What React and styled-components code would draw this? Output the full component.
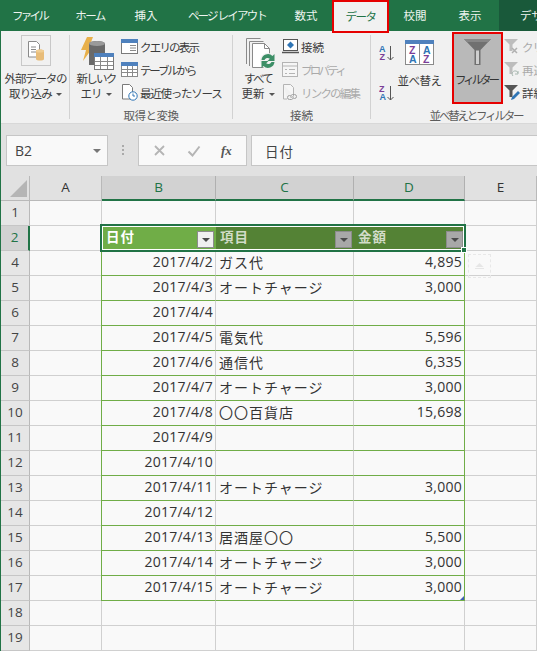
import React from 'react';
import styled, { createGlobalStyle } from 'styled-components';

const Global = createGlobalStyle`
  html, body { margin: 0; padding: 0; background: #f9f9f9; }
  body { font-family: "Noto Sans CJK JP", "Noto Sans", sans-serif; overflow: hidden; }
  #root { width: 537px; height: 651px; overflow: hidden; }
`;
const Page = styled.div`width: 537px; height: 651px; overflow: hidden; display: flex; flex-direction: column; border-left: 1px solid #217346; box-sizing: border-box;`;
const Tabs = styled.div`height: 31px; margin-left: -1px; background: #217346; display: flex; flex: none; position: relative;`;
const Tab = styled.div`
  width: ${p => p.$w}px; flex: none; box-sizing: border-box; text-align: center; font-size: 11.5px; line-height: 31px; white-space: nowrap;
  color: #eef5f0; letter-spacing: ${p => p.$ls || 0}px; margin-left: ${p => p.$ml || 0}px;
  ${p => p.$active && 'background:#f1f1f1;color:#217346;border:2px solid #e60000;height:33px;line-height:29px;position:relative;z-index:2;'}
  ${p => p.$dark && 'background:#19593a;text-align:left;padding-left:21px;flex:1;'}
`;
const Ribbon = styled.div`height: 92px; background: #f1f1f1; display: flex; flex: none; border-bottom: 1px solid #d8d8d8; box-sizing: content-box; overflow: hidden;`;
const Group = styled.div`
  width: ${p => p.$w}px; flex: none; box-sizing: border-box; display: flex; flex-direction: column; position: relative; margin-top: 4px;
  ${p => p.$last ? '' : 'border-right: 1px solid #d2d2d2; height: 84px;'}
`;
const GroupBody = styled.div`height: 71px; display: flex; flex: none; padding-left: ${p => p.$pl || 0}px;`;
const GroupLabel = styled.div`font-size: 11.5px; line-height: 14px; color: #5c5c5c; text-align: center; margin-top: 2px; width: ${p => p.$w || '100%'}; white-space: nowrap; letter-spacing: ${p => p.$ls || 0}px; margin-left: ${p => p.$ml || 0}px;`;
const BigButton = styled.div`width: ${p => p.$w}px; flex: none; display: flex; flex-direction: column; align-items: center; font-size: 11.5px; line-height: 15px; color: #3c3c3c; white-space: nowrap; text-align: center;`;
const IconBox = styled.div`width: 30px; height: 31px; box-sizing: border-box; border: 1px solid #c8c8c8; display: flex; align-items: center; justify-content: center; margin-bottom: 5px;`;
const BigIcon = styled.div`height: ${p => p.$h}px; box-sizing: border-box; padding-top: ${p => p.$pt || 0}px; padding-left: ${p => p.$pl || 0}px; display: flex; align-items: flex-start; justify-content: center;`;
const Txt = styled.span`letter-spacing: ${p => p.$ls || 0}px;`;
const Caret = styled.span`display: inline-block; width: 0; height: 0; border-left: 3px solid transparent; border-right: 3px solid transparent; border-top: 3px solid #555; vertical-align: 2px; margin-left: 4px;`;
const List = styled.div`display: flex; flex-direction: column; margin-left: ${p => p.$ml || 0}px; flex: none;`;
const Item = styled.div`height: 23px; display: flex; align-items: center; gap: 2px; font-size: 11.5px; white-space: nowrap; color: ${p => p.$off ? '#aaaaaa' : '#3c3c3c'};`;
const SortStack = styled.div`width: 18px; flex: none; display: flex; flex-direction: column; gap: 24px; margin: 10px 0 0 8px;`;
const FilterBtn = styled.div`width: 51px; height: 72px; margin: -3px 0 0 10px; flex: none; box-sizing: border-box; background: #b9b9b9; border: 2px solid #e60000; display: flex; flex-direction: column; align-items: center; font-size: 11.5px; line-height: 15px; color: #333; padding-top: 5px; white-space: nowrap;`;
const FilterLabel = styled.div`margin-top: 7px; letter-spacing: -3.1px; padding-right: 3px;`;
const FormulaBand = styled.div`height: 52px; flex: none; background: #e1e1e1; display: flex; align-items: flex-start; padding: 11px 0 0 5px; box-sizing: border-box;`;
const Field = styled.div`height: 31px; box-sizing: border-box; background: #f9f9f9; border: 1px solid #c6c6c6; flex: none; width: ${p => p.$w}px; display: flex; align-items: center;`;
const NameBox = styled(Field)`justify-content: space-between; padding: 0 6px 0 8px; font-size: 14px; color: #444; font-family: "Open Sans", sans-serif;`;
const NameCaret = styled.span`width: 0; height: 0; border-left: 4px solid transparent; border-right: 4px solid transparent; border-top: 4px solid #777;`;
const Dots = styled.div`width: 30px; flex: none; display: flex; flex-direction: column; align-items: center; gap: 2px; margin-top: 10px;`;
const Dot = styled.span`width: 2px; height: 2px; background: #aaa;`;
const FormulaIcons = styled(Field)`justify-content: space-around; padding: 0 4px; margin-right: 4px;`;
const Fx = styled.span`font-family: "Liberation Serif", serif; font-style: italic; font-weight: bold; font-size: 13px; color: #555;`;
const FormulaInput = styled(Field)`padding-left: 13px; font-size: 13.5px; color: #444; border-right: none; letter-spacing: 1px;`;

const Sheet = styled.div`display: grid; grid-template-columns: 29px 72px 114px 138px 111px 72px; grid-template-rows: 25px repeat(18, 25px); background: #f9f9f9; flex: none;`;
const Corner = styled.div`background: #e1e1e1; border-right: 1px solid #b9b9b9; border-bottom: 1px solid #b9b9b9; box-sizing: border-box; position: relative; overflow: hidden; &::after { content: ''; position: absolute; right: 2px; bottom: 3px; border-style: solid; border-width: 0 0 17px 17px; border-color: transparent transparent #b5b5b5 transparent; }`;
const ColHead = styled.div`
  box-sizing: border-box; text-align: center; font-size: 13.5px; line-height: 22px; font-family: "Open Sans", sans-serif;
  border-right: 1px solid ${p => p.$on ? '#b0b0b0' : '#b9b9b9'};
  background: ${p => p.$on ? '#d2d2d2' : '#e1e1e1'}; color: ${p => p.$on ? '#217346' : '#333'};
  border-bottom: ${p => p.$on ? '2px solid #217346' : '1px solid #b9b9b9'};
`;
const RowHead = styled.div`
  box-sizing: border-box; text-align: center; font-size: 13.5px; line-height: 22px; font-family: "Open Sans", sans-serif;
  background: ${p => p.$on ? '#d2d2d2' : '#e6e6e6'}; color: ${p => p.$on ? '#217346' : '#444'};
  border-bottom: 1px solid #c6c6c6;
  border-right: ${p => p.$on ? '2px solid #217346' : '1px solid #b9b9b9'};
`;
const Cell = styled.div`
  box-sizing: border-box; border-right: 1px solid ${p => p.$gr ? '#70ad47' : '#d0d0d0'}; border-bottom: 1px solid ${p => p.$gb ? '#70ad47' : '#d0d0d0'};
  ${p => p.$gl && 'box-shadow: -1px 0 0 #70ad47;'}
  font-size: 14px; line-height: 22px; color: #333; white-space: nowrap; padding: 0 2px 0 3px; letter-spacing: ${p => p.$jp ? '1px' : '0.25px'};
  text-align: ${p => p.$right ? 'right' : 'left'};
  font-family: ${p => p.$jp ? '"Noto Sans CJK JP"' : '"Open Sans"'}, sans-serif;
`;
const HeadCell = styled.div`
  box-sizing: border-box; background: ${p => p.$first ? '#70ad47' : '#548235'}; color: ${p => p.$first ? '#fff' : '#d2dcc8'};
  display: flex; justify-content: space-between; padding: 0 2px 0 4px; font-size: 13.5px; font-weight: bold; line-height: 21px; letter-spacing: 1px;
`;
const Drop = styled.span`width: 17px; height: 17px; margin-top: 5px; flex: none; box-sizing: border-box; border: 1px solid #8c8c8c; background: ${p => p.$first ? '#f0f0f0' : '#a8a8a8'}; display: flex; align-items: center; justify-content: center; &::after { content: ''; border-left: 4px solid transparent; border-right: 4px solid transparent; border-top: 4px solid #4a4a4a; }`;
const Selection = styled.div`grid-column: 3 / 6; grid-row: 3; margin: -2px -1px -1px -2px; border: 2px solid #217346; position: relative; pointer-events: none; box-shadow: inset 0 0 0 1px #fff; z-index: 2; &::after { content: ''; position: absolute; right: -3px; bottom: -3px; width: 6px; height: 6px; box-sizing: border-box; background: #217346; border: 1px solid #fff; }`;
const HeadRow = styled.div`grid-column: 3 / 6; grid-row: 3; display: grid; grid-template-columns: 114px 138px 111px; `;
const Corner2 = styled.div`position: absolute; right: 0; bottom: 0; width: 4px; height: 4px; background: #3f5fb5; clip-path: polygon(100% 0, 100% 100%, 0 100%);`;
const SmartTag = styled.div`position: absolute; left: 3px; top: 3px; width: 23px; height: 24px; border: 1px dashed #e8e8e8; box-sizing: border-box; display: flex; align-items: center; justify-content: center;`;
const EdgeCell = styled(Cell)`position: relative; overflow: visible;`;

const TableIcon = () => (
  <svg width="17" height="15" viewBox="0 0 17 15"><rect x="0.5" y="0.5" width="16" height="14" fill="#fff" stroke="#8a8a8a"/><rect x="0" y="0" width="17" height="4" fill="#4f81bd"/><path d="M1 7.5h15M1 10.5h15M6.5 4v10M11.5 4v10" stroke="#8a8a8a"/></svg>
);
const QueryIcon = () => (
  <svg width="17" height="15" viewBox="0 0 17 15"><rect x="0.5" y="0.5" width="16" height="14" fill="#fff" stroke="#7a7a7a"/><rect x="0" y="0" width="17" height="4" fill="#4f81bd"/><path d="M9 6.5h6M9 9h6M9 11.5h6" stroke="#8a8a8a"/></svg>
);
const RecentIcon = () => (
  <svg width="17" height="17" viewBox="0 0 17 17"><path d="M1.5.5h7l3 3V15h-10z" fill="#fff" stroke="#7a7a7a"/><circle cx="12" cy="12" r="4.2" fill="#fff" stroke="#2f75b5"/><path d="M12 9.5V12h2" stroke="#2f75b5" fill="none"/></svg>
);
const Lightning = () => (
  <svg width="33" height="33" viewBox="0 0 33 33">
    <path d="M6 0h6L8.5 9H13L2 24l3-11H0z" fill="#e8b04a"/>
    <path d="M8 7c0-4 16-4 16 0v21H8z" fill="#6a6a6a"/>
    <ellipse cx="16" cy="6.5" rx="8" ry="2.6" fill="#9a9a9a"/>
    <rect x="13.5" y="16.5" width="19" height="16" fill="#fff" stroke="#7a7a7a"/>
    <rect x="13" y="16" width="20" height="4" fill="#4f81bd"/>
    <path d="M14 24.5h18M14 28.5h18M19.5 20v12M26.5 20v12" stroke="#8a8a8a"/>
  </svg>
);
const ExternalIcon = () => (
  <svg width="18" height="20" viewBox="0 0 18 20"><path d="M1.5.5h8l3 3V16h-11z" fill="#fff" stroke="#8a8a8a"/><path d="M4 6h5M4 8.5h5M4 11h5" stroke="#8a8a8a"/><path d="M9 10c0-2 8-2 8 0v8c0 2-8 2-8 0z" fill="#e8bc78"/><ellipse cx="13" cy="10" rx="4" ry="1.5" fill="#f0cd92"/></svg>
);
const Refresh = () => (
  <svg width="30" height="32" viewBox="0 0 30 32">
    <path d="M.5 26V.5h14" fill="none" stroke="#8a8a8a"/>
    <path d="M3.5 28V3.5h14" fill="none" stroke="#8a8a8a"/>
    <path d="M6.5 5.5h12l5 5v19h-17z" fill="#fff" stroke="#8a8a8a"/>
    <path d="M18.5 5.5v5h5" fill="none" stroke="#8a8a8a"/>
    <circle cx="22" cy="23" r="8" fill="#f1f1f1"/>
    <path d="M15.5 22a6.5 6.5 0 0 1 11-4l2-2v7h-7l2.300-2.300a3.500 3.500 0 0 0-5.300 1.300z" fill="#3d8f67"/>
    <path d="M28.500 24a6.500 6.500 0 0 1-11 4l-2 2v-7h7l-2.300 2.300a3.500 3.500 0 0 0 5.300-1.300z" fill="#3d8f67"/>
  </svg>
);
const ConnIcon = () => (
  <svg width="17" height="15" viewBox="0 0 17 15"><rect x="1.500" y="0.500" width="14" height="11" fill="#fff" stroke="#555"/><path d="M0 13.500h17" stroke="#555" strokeWidth="1.500"/><path d="M8.500 2.500l3.500 3.500-3.500 3.500L5 6z" fill="#2f75b5"/></svg>
);
const PropIcon = () => (
  <svg width="17" height="16" viewBox="0 0 17 16"><rect x="0.500" y="0.500" width="15" height="14" fill="#f6f6f6" stroke="#b4b4b4"/><path d="M0 4h16" stroke="#b4b4b4"/><path d="M3 7.500h2M3 11.500h2M7 7.500h6M7 11.500h6" stroke="#b4b4b4"/></svg>
);
const LinkIcon = () => (
  <svg width="17" height="17" viewBox="0 0 17 17"><path d="M1.500.500h7l3 3V12M5 15H1.500V.500" fill="#f6f6f6" stroke="#b4b4b4"/><path d="M8.500 11.500h-1a2 2 0 0 0 0 4h2a2 2 0 0 0 1-3.500M11.500 14.500h1a2 2 0 0 0 0-4h-2a2 2 0 0 0-1 3.500" fill="none" stroke="#a0a0a0"/></svg>
);
const SortSmall = ({ up }) => (
  <svg width="16" height="16" viewBox="0 0 16 16" fontFamily="Liberation Sans" fontWeight="bold" fontSize="9">
    <text x="0" y="7" fill={up ? '#2f75b5' : '#7b3f98'}>{up ? 'A' : 'Z'}</text>
    <text x="0.500" y="15" fill={up ? '#7b3f98' : '#2f75b5'}>{up ? 'Z' : 'A'}</text>
    <path d="M11.500 1v14M8.500 12l3 3 3-3" fill="none" stroke="#555"/>
  </svg>
);
const SortBig = () => (
  <svg width="29" height="25" viewBox="0 0 29 25" fontFamily="Liberation Sans" fontWeight="bold" fontSize="10.500">
    <rect x="0.500" y="0.500" width="28" height="24" fill="#fff" stroke="#8a8a8a"/>
    <rect x="0" y="0" width="29" height="4" fill="#4f81bd"/>
    <path d="M14.500 4v21" stroke="#8a8a8a"/>
    <text x="4" y="13.500" fill="#7b3f98">Z</text><text x="4" y="23" fill="#2f75b5">A</text>
    <text x="18" y="13.500" fill="#2f75b5">A</text><text x="18" y="23" fill="#7b3f98">Z</text>
  </svg>
);
const Funnel = () => (
  <svg width="27" height="26" viewBox="0 0 27 26">
    <path d="M0 0h27L16.500 11v15h-6V11z" fill="#707070"/>
    <path d="M0 0h27l-3 3H3z" fill="#868686"/>
    <path d="M12 11.500h3V25h-3z" fill="#cfcfcf"/>
  </svg>
);
const MiniFunnel = ({ color, children }) => (
  <svg width="16" height="16" viewBox="0 0 16 16"><path d="M0 0h14L8.500 5.500V12h-3V5.500z" fill={color}/>{children}</svg>
);
const XMark = () => (
  <svg width="13" height="13" viewBox="0 0 13 13"><path d="M2 2l9 9M11 2l-9 9" stroke="#b5b5b5" strokeWidth="1.800"/></svg>
);
const Check = () => (
  <svg width="14" height="12" viewBox="0 0 14 12"><path d="M1.500 6.500l4 4 7-9" fill="none" stroke="#b5b5b5" strokeWidth="2"/></svg>
);

const rows = [
  ['2017/4/2', 'ガス代', '4,895'],
  ['2017/4/3', 'オートチャージ', '3,000'],
  ['2017/4/4', '', ''],
  ['2017/4/5', '電気代', '5,596'],
  ['2017/4/6', '通信代', '6,335'],
  ['2017/4/7', 'オートチャージ', '3,000'],
  ['2017/4/8', '〇〇百貨店', '15,698'],
  ['2017/4/9', '', ''],
  ['2017/4/10', '', ''],
  ['2017/4/11', 'オートチャージ', '3,000'],
  ['2017/4/12', '', ''],
  ['2017/4/13', '居酒屋〇〇', '5,500'],
  ['2017/4/14', 'オートチャージ', '3,000'],
  ['2017/4/15', 'オートチャージ', '3,000'],
];

export default function App() {
  return (
    <Page>
      <Global />
      <Tabs>
        <Tab $w={59} $ls={-2.7}>ファイル</Tab>
        <Tab $w={62} $ls={-1.5}>ホーム</Tab>
        <Tab $w={50}>挿入</Tab>
        <Tab $w={112} $ls={-1.8}>ページ レイアウト</Tab>
        <Tab $w={46}>数式</Tab>
        <Tab $w={57} $ml={3} $ls={-1.5} $active>データ</Tab>
        <Tab $w={52}>校閲</Tab>
        <Tab $w={58}>表示</Tab>
        <Tab $dark>デザイン</Tab>
      </Tabs>
      <Ribbon>
        <Group $w={69}>
          <GroupBody>
            <BigButton $w={69}>
              <IconBox><ExternalIcon /></IconBox>
              <Txt $ls={-1.2}>外部データの</Txt>
              <div><Txt $ls={-0.7}>取り込み</Txt><Caret /></div>
            </BigButton>
          </GroupBody>
        </Group>
        <Group $w={163}>
          <GroupBody $pl={5}>
            <BigButton $w={42}>
              <BigIcon $h={36} $pt={2} $pl={2}><Lightning /></BigIcon>
              <Txt $ls={-1.7}>新しいク</Txt>
              <div><Txt $ls={-1}>エリ</Txt><Caret /></div>
            </BigButton>
            <List $ml={4}>
              <Item><QueryIcon /><Txt $ls={-1.8}>クエリの表示</Txt></Item>
              <Item><TableIcon /><Txt $ls={-2.2}>テーブルから</Txt></Item>
              <Item><RecentIcon /><Txt $ls={-1.25}>最近使ったソース</Txt></Item>
            </List>
          </GroupBody>
          <GroupLabel $ls={-0.5}>取得と変換</GroupLabel>
        </Group>
        <Group $w={138}>
          <GroupBody $pl={6}>
            <BigButton $w={38}>
              <BigIcon $h={36} $pt={3} $pl={6}><Refresh /></BigIcon>
              <Txt $ls={-1.8}>すべて</Txt>
              <div>更新<Caret /></div>
            </BigButton>
            <List $ml={5}>
              <Item><ConnIcon />接続</Item>
              <Item $off><PropIcon /><Txt $ls={-2.7}>プロパティ</Txt></Item>
              <Item $off><LinkIcon /><Txt $ls={-1.8}>リンクの編集</Txt></Item>
            </List>
          </GroupBody>
          <GroupLabel>接続</GroupLabel>
        </Group>
        <Group $w={166} $last>
          <GroupBody>
            <SortStack><SortSmall up /><SortSmall /></SortStack>
            <BigButton $w={45}>
              <BigIcon $h={38} $pt={5}><SortBig /></BigIcon>
              <Txt $ls={-0.5}>並べ替え</Txt>
            </BigButton>
            <FilterBtn>
              <Funnel />
              <FilterLabel>フィルター</FilterLabel>
            </FilterBtn>
            <List $ml={1}>
              <Item $off><MiniFunnel color="#bdbdbd"><path d="M8 9l5 5M13 9l-5 5" stroke="#b0b0b0" strokeWidth="1.500" /></MiniFunnel><Txt $ls={-1}>クリア</Txt></Item>
              <Item $off><MiniFunnel color="#bdbdbd"><path d="M9 14a3 3 0 1 1 5-3M14 9v3h-3" fill="none" stroke="#a8b8b0" /></MiniFunnel>再適用</Item>
              <Item><MiniFunnel color="#555"><path d="M7 15l1-3 6-6 2 2-6 6z" fill="#2f75b5" /></MiniFunnel>詳細設定</Item>
            </List>
          </GroupBody>
          <GroupLabel $w="150px" $ml={30} $ls={-2.2}>並べ替えとフィルター</GroupLabel>
        </Group>
      </Ribbon>
      <FormulaBand>
        <NameBox $w={102}>B2<NameCaret /></NameBox>
        <Dots><Dot /><Dot /><Dot /></Dots>
        <FormulaIcons $w={109}><XMark /><Check /><Fx>fx</Fx></FormulaIcons>
        <FormulaInput $w={290}>日付</FormulaInput>
      </FormulaBand>
      <Sheet>
        <Corner />
        <ColHead>A</ColHead>
        <ColHead $on>B</ColHead>
        <ColHead $on>C</ColHead>
        <ColHead $on>D</ColHead>
        <ColHead>E</ColHead>

        <RowHead>1</RowHead>
        <Cell /><Cell /><Cell /><Cell /><Cell />

        <RowHead $on>2</RowHead>
        <Cell />
        <HeadRow>
          <HeadCell $first>日付<Drop $first /></HeadCell>
          <HeadCell>項目<Drop /></HeadCell>
          <HeadCell>金額<Drop /></HeadCell>
        </HeadRow>
        <Selection />
        <Cell style={{ gridColumn: 6, gridRow: 3 }} />

        {rows.map((r, i) => (
          <React.Fragment key={r[0]}>
            <RowHead>{i + 4}</RowHead>
            <Cell />
            <Cell $right $gb $gl>{r[0]}</Cell>
            <Cell $jp $gb>{r[1]}</Cell>
            <EdgeCell $right $gb $gr>{r[2]}{i === rows.length - 1 && <Corner2 />}</EdgeCell>
            <EdgeCell>{i === 0 && <SmartTag><svg width="9" height="6" viewBox="0 0 9 6"><path d="M4.500 0l4 4H.500z" fill="#e6e6e6" /><path d="M0 5.500h9" stroke="#e6e6e6" /></svg></SmartTag>}</EdgeCell>
          </React.Fragment>
        ))}
        {[18, 19].map(n => (
          <React.Fragment key={n}>
            <RowHead>{n}</RowHead>
            <Cell /><Cell /><Cell /><Cell /><Cell />
          </React.Fragment>
        ))}
      </Sheet>
    </Page>
  );
}
